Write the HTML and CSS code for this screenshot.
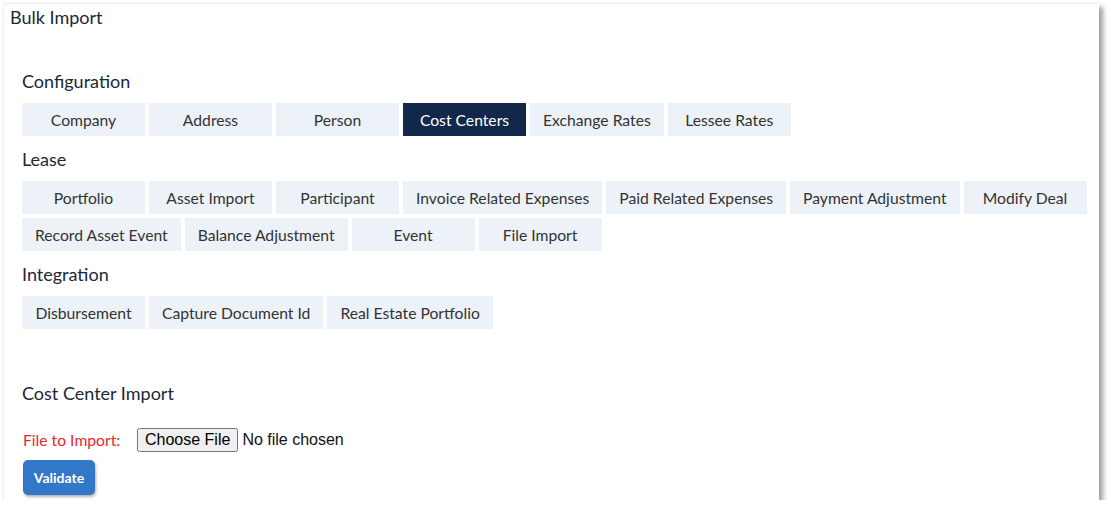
FILE: index.html
```html
<!DOCTYPE html>
<html lang="en">
<head>
  <meta charset="UTF-8" />
  <title>Bulk Import</title>
  <link rel="stylesheet" href="styles.css">
</head>
<body>
  <div class="panel">
    <h1 class="panel-title">Bulk Import</h1>

    <div class="panel-body">
      <!-- Configuration -->
      <h2 class="group-title">Configuration</h2>
      <div class="tab-list">
        <button class="tab">Company</button>
        <button class="tab">Address</button>
        <button class="tab">Person</button>
        <button class="tab active">Cost Centers</button>
        <button class="tab">Exchange Rates</button>
        <button class="tab">Lessee Rates</button>
      </div>

      <!-- Lease -->
      <h2 class="group-title">Lease</h2>
      <div class="tab-list">
        <button class="tab">Portfolio</button>
        <button class="tab">Asset Import</button>
        <button class="tab">Participant</button>
        <button class="tab">Invoice Related Expenses</button>
        <button class="tab">Paid Related Expenses</button>
        <button class="tab">Payment Adjustment</button>
        <button class="tab">Modify Deal</button>
        <button class="tab">Record Asset Event</button>
        <button class="tab">Balance Adjustment</button>
        <button class="tab">Event</button>
        <button class="tab">File Import</button>
      </div>

      <!-- Integration -->
      <h2 class="group-title">Integration</h2>
      <div class="tab-list">
        <button class="tab">Disbursement</button>
        <button class="tab">Capture Document Id</button>
        <button class="tab">Real Estate Portfolio</button>
      </div>

      <!-- Form import -->
      <h2 class="group-title import-title">Cost Center Import</h2>
      <div class="file-row">
        <label class="file-label" for="file-input">File to Import:</label>
        <input type="file" id="file-input" class="file-input">
      </div>
      <button class="btn-validate">Validate</button>
    </div>
  </div>
</body>
</html>
```

FILE: styles.css
```css
/* ---------- BASE ---------- */
* {
  margin: 0;
  padding: 0;
  box-sizing: border-box;
}
body {
  font-family: Lato, "Open Sans", Arial, sans-serif;
  background: #fff;
  color: #1b2838;
}

/* ---------- PANEL ---------- */
.panel {
  margin: 3px 0 0 3px;
  width: 1096px;
  height: 497px;
  background: #fff;
  border-left: 1px solid #eeeeee;
  border-top: 1px solid #f2f2f2;
  box-shadow: 4px 4px 5px rgba(0, 0, 0, 0.38);
  padding: 2px 8px 0 6px;
}
.panel-title {
  font-size: 18px;
  font-weight: normal;
  line-height: 22px;
  color: #1b2838;
}
.panel-body {
  padding: 42px 0 0 12px;
}

/* ---------- GROUPS ---------- */
.group-title {
  font-size: 18px;
  font-weight: normal;
  line-height: 22px;
  margin-bottom: 11px;
  color: #1b2838;
}
.tab-list {
  display: flex;
  flex-wrap: wrap;
  gap: 4px;
  margin-bottom: 12px;
}
.tab {
  min-width: 123px;
  height: 33px;
  padding: 0 13px;
  border: none;
  background: #edf2f9;
  color: #333;
  font-family: Lato, "Open Sans", Arial, sans-serif;
  font-size: 15.7px;
  cursor: pointer;
}
.tab:hover {
  background: #dfe8f4;
}
.tab.active {
  background: #12284a;
  color: #fff;
}

/* ---------- IMPORT FORM ---------- */
.import-title {
  margin-top: 53px;
  margin-bottom: 24px;
}
.file-row {
  display: flex;
  align-items: center;
  height: 24px;
}
.file-label {
  color: #e8262b;
  font-size: 15.7px;
  width: 114px;
  margin-left: 1px;
}
.file-input {
  font-family: Arial, "Liberation Sans", sans-serif;
  font-size: 16px;
  color: #111;
}
.btn-validate {
  margin: 8px 0 0 1px;
  width: 72px;
  height: 35px;
  border: none;
  border-radius: 5px;
  background: #3277c8;
  color: #fff;
  font-family: Lato, "Open Sans", Arial, sans-serif;
  font-weight: bold;
  font-size: 14px;
  box-shadow: 1px 2px 3px rgba(0, 0, 0, 0.3);
  cursor: pointer;
}
```
